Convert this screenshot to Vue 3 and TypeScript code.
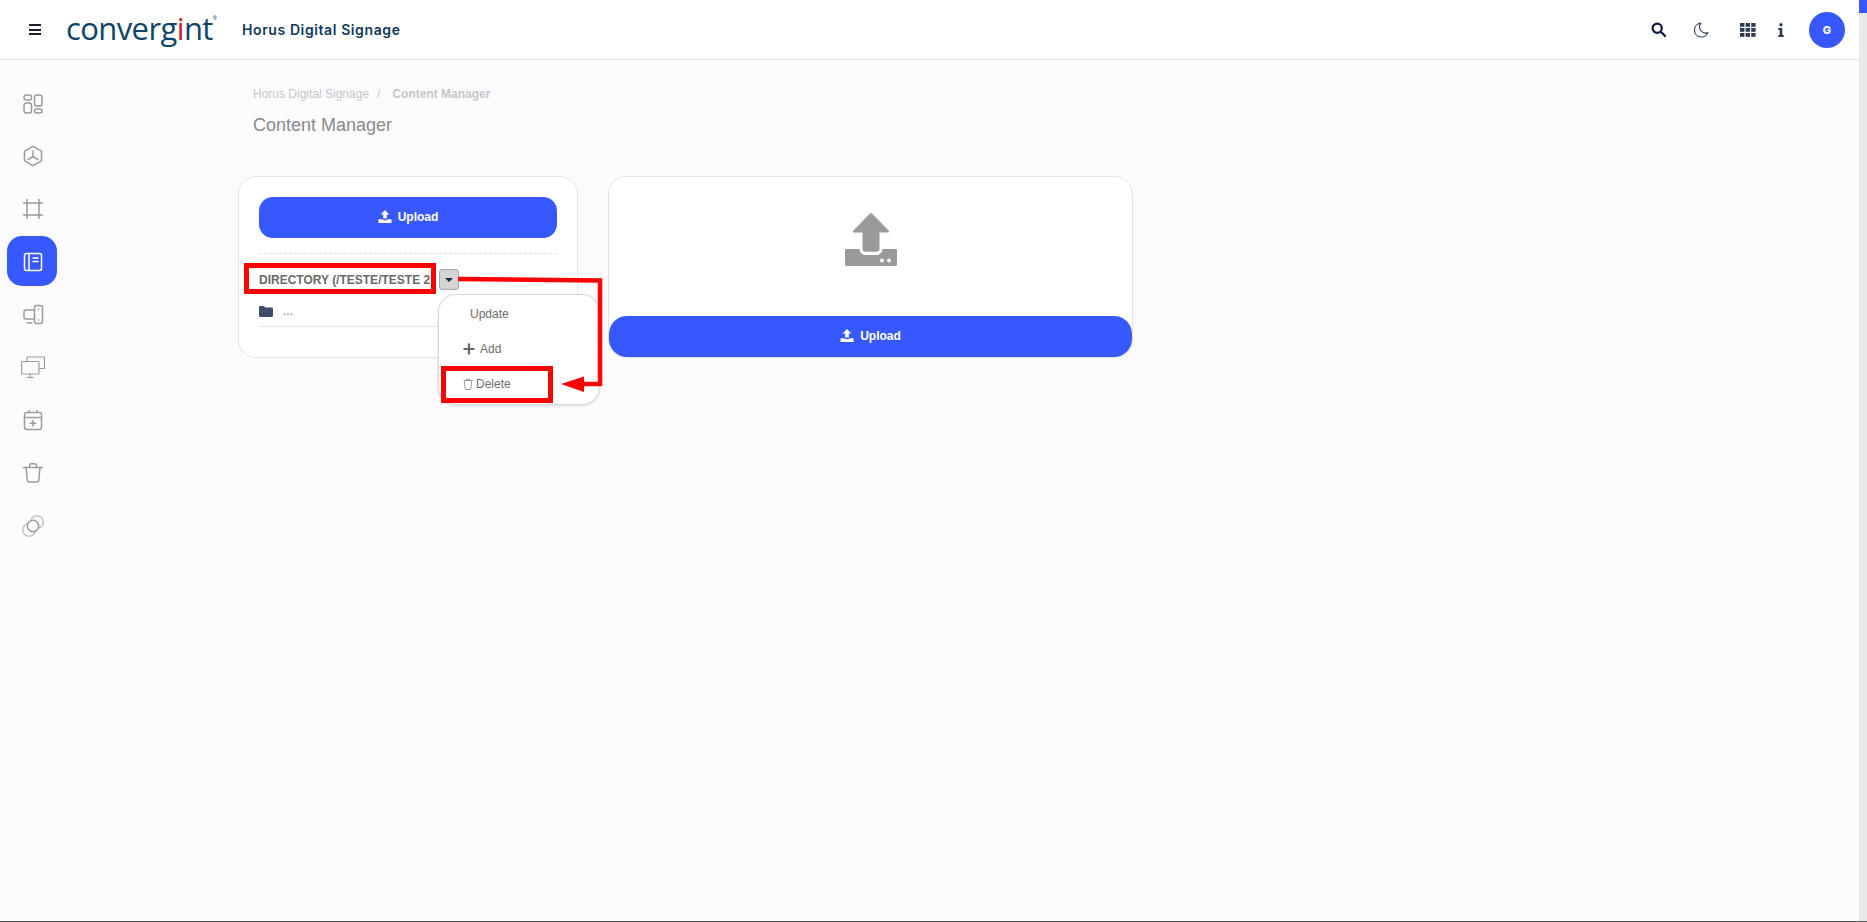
<script setup lang="ts">
import { ref } from "vue";

const sideItems = ref([
  { key: "dash", active: false },
  { key: "cube", active: false },
  { key: "frame", active: false },
  { key: "book", active: true },
  { key: "devices", active: false },
  { key: "screens", active: false },
  { key: "calendar", active: false },
  { key: "trash", active: false },
  { key: "copy", active: false },
]);
</script>

<template>
  <div class="page">
    <header class="topbar">
      <div class="burger"><span></span><span></span><span></span></div>
      <div class="logo">converg<span class="logo-i">i</span>nt<sup>®</sup></div>
      <div class="app-name">Horus Digital Signage</div>
      <div class="top-icons">
        <svg class="t-search" width="15" height="15" viewBox="0 0 16 16" fill="none" stroke="#0d1b4a" stroke-width="2.4">
          <circle cx="6.6" cy="6.6" r="4.9" />
          <path d="M10.4 10.4 15 15" stroke-linecap="round" />
        </svg>
        <svg class="t-moon" width="16" height="16" viewBox="0 0 16 16" fill="none" stroke="#3a4a63" stroke-width="1.2">
          <path d="M8 1.2A6.9 6.9 0 1 0 14.800 10.600 6 6 0 0 1 8 1.200Z" stroke-linejoin="round" />
        </svg>
        <svg class="t-grid" width="16" height="14" viewBox="0 0 16 14" fill="#2c3a52">
          <rect x="0" y="0" width="4.400" height="3.800" /><rect x="5.600" y="0" width="4.400" height="3.800" /><rect x="11.200" y="0" width="4.400" height="3.800" />
          <rect x="0" y="5" width="4.400" height="3.800" /><rect x="5.600" y="5" width="4.400" height="3.800" /><rect x="11.200" y="5" width="4.400" height="3.800" />
          <rect x="0" y="10" width="4.400" height="3.800" /><rect x="5.600" y="10" width="4.400" height="3.800" /><rect x="11.200" y="10" width="4.400" height="3.800" />
        </svg>
        <svg class="t-info" width="6" height="14" viewBox="0 0 6 14" fill="#2c3a52">
          <circle cx="3" cy="1.700" r="1.700" />
          <path d="M0.300 5h4v7h1.400v2H0.300v-2h1.400V7H0.300Z" />
        </svg>
        <div class="avatar">G</div>
      </div>
    </header>

    <div class="body">
      <nav class="sidebar">
        <div v-for="item in sideItems" :key="item.key" class="side-item" :class="{ active: item.active }">
          <svg width="24" height="24" viewBox="0 0 24 24" fill="none" stroke="currentColor" stroke-width="1.500" stroke-linecap="round" stroke-linejoin="round">
            <template v-if="item.key === 'dash'">
              <rect x="3" y="3" width="7.500" height="5" rx="2.200" />
              <rect x="3" y="11" width="7.500" height="10" rx="2.600" />
              <rect x="13.500" y="3" width="7.500" height="11" rx="2.600" />
              <rect x="13.500" y="17" width="7.500" height="4" rx="2" />
            </template>
            <template v-else-if="item.key === 'cube'">
              <path d="M12 2.300 20.500 7.200v9.600L12 21.700l-8.500-4.900V7.200Z" />
              <path d="M12 6.800v5.700M12 12.500l-5 3.200M12 12.500l5 3.200" />
            </template>
            <template v-else-if="item.key === 'frame'">
              <path d="M6 2.500v19M18 2.500v19M2.500 6h19M2.500 18h19" />
            </template>
            <template v-else-if="item.key === 'book'">
              <rect x="3.500" y="3.500" width="17" height="17" rx="2" />
              <path d="M8 3.500v17M12 8h5M12 11.500h5" />
            </template>
            <template v-else-if="item.key === 'devices'">
              <rect x="13.500" y="2.500" width="8" height="18" rx="2" />
              <path d="M13.500 7H5a2 2 0 0 0-2 2v5a2 2 0 0 0 2 2h8.500M6 20h5M17.500 6.500h.01M17.500 17h.01" />
            </template>
            <template v-else-if="item.key === 'screens'">
              <g stroke-width="1.200">
                <rect x="0.500" y="6.500" width="17.500" height="12.500" rx="1" />
                <path d="M6 6V2h17.500v11.500H19M6 22.500h6.500M9.300 19v3.500" />
              </g>
            </template>
            <template v-else-if="item.key === 'calendar'">
              <rect x="3.500" y="4.500" width="17" height="17" rx="2.200" />
              <path d="M3.500 9.500h17M8 2.500v2M16 2.500v2M12 12.500v5.500M9.200 15.200h5.600" />
            </template>
            <template v-else-if="item.key === 'trash'">
              <path d="M2.500 6.500h19M8.500 6V4.800a2 2 0 0 1 2-2h3a2 2 0 0 1 2 2V6M5 6.500l1.200 12.200a2.400 2.400 0 0 0 2.400 2.300h6.800a2.400 2.400 0 0 0 2.400-2.300L19 6.500" />
            </template>
            <template v-else>
              <circle cx="8" cy="16" r="6.300" stroke="#c4c4c4" />
              <circle cx="16" cy="8" r="6.300" stroke="#c4c4c4" />
              <circle cx="12" cy="12" r="5.700" fill="#fcfcff" />
            </template>
          </svg>
        </div>
      </nav>

      <main class="content">
        <div class="heading">
          <div class="crumbs">
            <span>Horus Digital Signage</span>
            <span class="slash">/</span>
            <b>Content Manager</b>
          </div>
          <h1>Content Manager</h1>
        </div>

        <div class="cards">
          <section class="card tree-card">
            <button class="btn tree-upload">
              <svg width="14" height="13" viewBox="0 0 14 13" fill="#fff"><path d="M7 0 11.400 4.600H8.800V8.400H5.200V4.600H2.600ZM0.500 9.200H4.400c.3.600 1.200 1 2.600 1s2.300-.4 2.600-1h3.900V13H.500Z" /></svg>
              Upload
            </button>
            <div class="dashed"></div>
            <div class="dir-row">
              <span class="dir-label">DIRECTORY (/TESTE/TESTE 2</span>
              <span class="caret-btn"><i></i></span>

              <div class="menu">
                <div class="menu-row update">Update</div>
                <div class="menu-row add">
                  <svg width="12" height="12" viewBox="0 0 12 12" stroke="#666" stroke-width="2.200"><path d="M6 .5v11M.5 6h11" /></svg>
                  Add
                </div>
                <div class="menu-row del">
                  <svg width="10" height="12" viewBox="0 0 10 12" fill="none" stroke="#999" stroke-width="1"><path d="M.5 2.500h9M3.200 2.300V1.200h3.600v1.100M1.400 2.500l.7 8.200c0 .4.3.8.8.8h4.200c.5 0 .8-.4.8-.8l.7-8.200" /></svg>
                  Delete
                </div>
              </div>
            </div>
            <div class="file-row">
              <svg width="14" height="11" viewBox="0 0 14 11" fill="#3d4f68"><path d="M0 1.200C0 .5.500 0 1.200 0h3.600L6.400 1.600h6.400c.7 0 1.200.5 1.200 1.200v7c0 .7-.5 1.200-1.200 1.200H1.200C.5 11 0 10.500 0 9.800Z" /></svg>
              <span>...</span>
            </div>
          </section>

          <section class="card drop-card">
            <div class="drop-zone">
              <svg width="52" height="53" viewBox="0 0 52 53" fill="#9a9a9a">
                <path d="M25 .6a1.500 1.500 0 0 1 2 0l16.600 17c.8.900.3 2-.8 2H34.500v16.400c0 1.700-1.100 2.800-2.800 2.800H20.300c-1.700 0-2.800-1.100-2.800-2.800V19.600H9.200c-1.100 0-1.600-1.100-.8-2Z" />
                <path d="M1.500 36h13c.3 3.600 2.800 6 6 6h11c3.200 0 5.700-2.400 6-6h13c.8 0 1.500.7 1.500 1.500v14c0 .8-.7 1.500-1.500 1.500h-49C.7 53 0 52.300 0 51.500v-14C0 36.700.7 36 1.500 36Z" />
                <circle cx="37" cy="47.500" r="2" fill="#fff" /><circle cx="44" cy="47.500" r="2" fill="#fff" />
              </svg>
            </div>
            <button class="btn drop-upload">
              <svg width="14" height="13" viewBox="0 0 14 13" fill="#fff"><path d="M7 0 11.400 4.600H8.800V8.400H5.200V4.600H2.600ZM0.500 9.200H4.400c.3.600 1.200 1 2.600 1s2.300-.4 2.600-1h3.900V13H.500Z" /></svg>
              Upload
            </button>
          </section>
        </div>

        <!-- marcacoes vermelhas do print -->
        <div class="mark mark-dir"></div>
        <div class="mark mark-del"></div>
        <svg class="arrow" width="150" height="120" viewBox="0 0 150 120" fill="none">
          <path d="M0 3 142 4.500V108H118" stroke="#f00" stroke-width="4.500" />
          <path d="M103 108 126 100.500V116Z" fill="#f00" />
        </svg>
      </main>
      <div class="scroll-strip"><i></i></div>
    </div>
  </div>
</template>

<style>
html, body {
  margin: 0;
  height: 100%;
  overflow: hidden;
  background: #fcfcff;
}
</style>

<style scoped>
.page {
  width: 1867px;
  height: 922px;
  display: flex;
  flex-direction: column;
  font-family: "Liberation Sans", Arial, sans-serif;
  background: #fcfcff;
  border-bottom: 1px solid #555;
  box-sizing: border-box;
  position: relative;
}
.topbar {
  height: 60px;
  width: 1859px;
  box-sizing: border-box;
  background: #fff;
  border-bottom: 1px solid #e6e6ea;
  display: flex;
  align-items: center;
  padding-left: 29px;
  flex: none;
}
.burger {
  width: 12px;
  display: flex;
  flex-direction: column;
  gap: 2.500px;
  margin-right: 25px;
}
.burger span {
  display: block;
  height: 2px;
  background: #1a2230;
}
.logo {
  font-family: "Open Sans", Lato, sans-serif;
  font-weight: 400;
  font-size: 31px;
  color: #0f4468;
  width: 176px;
  letter-spacing: -0.600px;
  line-height: 1;
  margin-top: -3px;
  white-space: nowrap;
}
.logo-i {
  color: #c8202f;
}
.logo sup {
  font-size: 5px;
  vertical-align: 20px;
  line-height: 0;
}
.app-name {
  font-family: Inter, "Liberation Sans", sans-serif;
  font-weight: 600;
  font-size: 14px;
  color: #0d3a5c;
  letter-spacing: 0.600px;
  margin-top: -1px;
}
.top-icons {
  margin-left: auto;
  display: flex;
  align-items: center;
  padding-right: 14px;
}
.t-search { margin-right: 27px; }
.t-moon { margin-right: 31px; }
.t-grid { margin-right: 22px; }
.t-info { margin-right: 25px; }
.avatar {
  width: 36px;
  height: 36px;
  border-radius: 50%;
  background: #3858ff;
  color: #fff;
  font-family: Inter, sans-serif;
  font-weight: 800;
  font-size: 11px;
  display: flex;
  align-items: center;
  justify-content: center;
}
.body {
  flex: 1;
  display: flex;
  min-height: 0;
}
.sidebar {
  width: 66px;
  flex: none;
  box-sizing: border-box;
  padding: 18px 9px 0 7px;
  display: flex;
  flex-direction: column;
  gap: 2.750px;
}
.side-item {
  height: 50px;
  flex: none;
  display: flex;
  align-items: center;
  justify-content: center;
  border-radius: 15px;
  color: #9b9b9b;
  padding: 1px 0 0 1px;
  box-sizing: border-box;
}
.side-item.active {
  background: #3858ff;
  color: #fff;
}
.content {
  flex: 1;
  position: relative;
  padding-left: 172px;
}
.heading {
  padding: 26px 0 0 15px;
}
.crumbs {
  font-size: 12px;
  line-height: 16px;
  color: #c6c6c9;
  display: flex;
  gap: 8px;
}
.crumbs .slash { margin-right: 4px; }
.crumbs b { font-weight: 700; }
h1 {
  margin: 11px 0 0;
  font-size: 18px;
  line-height: 24px;
  font-weight: 400;
  color: #8a8a8a;
}
.cards {
  display: flex;
  gap: 30px;
  margin-top: 39px;
}
.card {
  background: #fff;
  border: 1px solid #e4e4e8;
  border-radius: 18px;
  height: 182px;
  box-sizing: border-box;
}
.tree-card {
  width: 340px;
  padding: 20px 20px 0;
}
.drop-card {
  width: 525px;
  display: flex;
  flex-direction: column;
}
.btn {
  border: 0;
  background: #3858ff;
  color: #fff;
  font-family: "Liberation Sans", Arial, sans-serif;
  font-weight: 700;
  font-size: 12px;
  display: flex;
  align-items: center;
  justify-content: center;
  gap: 6px;
  height: 41px;
  width: 100%;
  padding: 0 0 2px;
}
.tree-upload {
  border-radius: 14px;
}
.drop-upload {
  border-radius: 18px;
  margin-top: auto;
}
.dashed {
  border-top: 1px dashed #e2e2e6;
  margin-top: 15px;
}
.dir-row {
  display: flex;
  align-items: center;
  gap: 9px;
  height: 21px;
  margin-top: 15px;
  position: relative;
}
.dir-label {
  font-size: 12px;
  font-weight: 700;
  color: #6a6a6a;
  width: 171px;
  white-space: nowrap;
}
.caret-btn {
  width: 20px;
  height: 21px;
  box-sizing: border-box;
  background: #d4d4d4;
  border: 1px solid #a8a8a8;
  border-radius: 3px;
  display: flex;
  align-items: center;
  justify-content: center;
}
.caret-btn i {
  width: 0;
  height: 0;
  border-left: 4px solid transparent;
  border-right: 4px solid transparent;
  border-top: 4px solid #1c2a3f;
}
.menu {
  position: absolute;
  left: 179px;
  top: 25px;
  width: 162px;
  height: 111px;
  box-sizing: border-box;
  background: #fff;
  border: 1px solid #d8d8dc;
  border-radius: 18px;
  box-shadow: 0 1px 3px rgba(0, 0, 0, 0.12);
  font-size: 12px;
  color: #6e6e6e;
  z-index: 2;
}
.menu-row {
  display: flex;
  align-items: center;
  height: 35px;
}
.update { padding-left: 31px; margin-top: 1px; }
.add { padding-left: 24px; gap: 5px; }
.del { padding-left: 24px; gap: 3px; }
.file-row {
  display: flex;
  align-items: center;
  gap: 10px;
  height: 37px;
  padding-top: 6px;
  border-bottom: 1px solid #e6e6ea;
  font-size: 12px;
  color: #777;
  box-sizing: border-box;
}
.drop-zone {
  flex: 1;
  display: flex;
  justify-content: center;
  padding-top: 36px;
  box-sizing: border-box;
}
.mark {
  position: absolute;
  border: 5px solid #f00;
  box-sizing: border-box;
  z-index: 3;
}
.mark-dir {
  left: 178px;
  top: 203px;
  width: 192px;
  height: 31px;
}
.mark-del {
  left: 375px;
  top: 306px;
  width: 112px;
  height: 37px;
}
.arrow {
  position: absolute;
  left: 392px;
  top: 216px;
  z-index: 3;
}
.scroll-strip {
  width: 8px;
  flex: none;
  background: #e8e8e8;
  margin-top: -60px;
  position: relative;
}
.scroll-strip i {
  display: block;
  height: 13px;
  background: #3858ff;
}
</style>
